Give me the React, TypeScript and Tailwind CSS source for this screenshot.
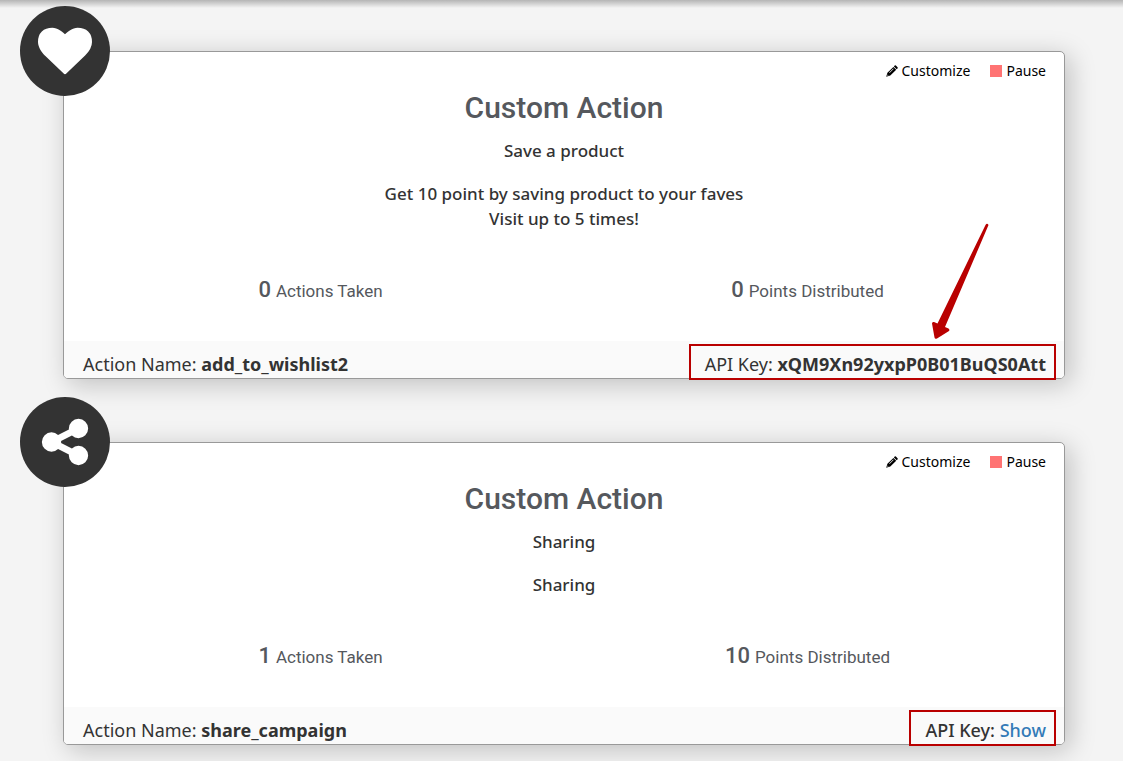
import React from 'react';

interface Campaign {
  id: string;
  icon: React.ReactNode;
  title: string;
  name: string;
  description: string[];
  actions: number;
  points: number;
  actionName: string;
  apiKey?: string;
  arrow?: boolean;
}

const HeartIcon = () => (
  <svg viewBox="0 0 1792 1792" className="w-[54px] h-[54px]" fill="currentColor" aria-hidden="true">
    <path d="M896 1664q-26 0-44-18l-624-602q-10-8-27.5-26T145 952.5 77 855 23.5 734 0 596q0-220 127-344t351-124q62 0 126.500 21.500t120 58T820 276t76 68q36-36 76-68t95.500-68.500 120-58T1314 128q224 0 351 124t127 344q0 221-229 450l-623 600q-18 18-44 18z" />
  </svg>
);

const ShareIcon = () => (
  <svg viewBox="-128 0 1792 1792" className="w-[54px] h-[54px]" fill="currentColor" aria-hidden="true">
    <path d="M1216 1024q133 0 226.500 93.500t93.500 226.500-93.500 226.500-226.500 93.500-226.500-93.500-93.500-226.500q0-12 2-34l-360-180q-92 86-218 86-133 0-226.500-93.500T0 896t93.500-226.500T320 576q126 0 218 86l360-180q-2-22-2-34 0-133 93.500-226.500T1216 128t226.500 93.500T1536 448t-93.500 226.500T1216 768q-126 0-218-86L638 862q2 22 2 34t-2 34l360 180q92-86 218-86z" />
  </svg>
);

const PencilIcon = () => (
  <svg viewBox="0 0 12 12" className="w-3 h-3" fill="currentColor" aria-hidden="true">
    <path d="M8.700.6q.6-.6 1.200 0l1.600 1.600q.6.6 0 1.200l-.8.8-2.800-2.800zM7.400 1.900l2.800 2.800-5.900 5.900L.2 11.800l1.200-4zM7.200 3.600L3.200 7.600l.4.400 4-4zM1.700 9.400l-.4 1.300 1.300-.4z" fillRule="evenodd" />
  </svg>
);

const ArrowMark = () => (
  <svg
    viewBox="0 0 60 118"
    className="absolute right-[56px] bottom-[37px] w-[60px] h-[118px] pointer-events-none"
    fill="#b90000"
    aria-hidden="true"
  >
    <path d="M55.500 3Q57 .5 58.500 3L15 105L18.500 106.500Q20 107.500 19 109L7 116.500Q5 117.500 4.500 115.500L2 101.500Q2 99.500 4 100L7.500 101.500z" />
  </svg>
);

const Stat = ({ value, label }: { value: number; label: string }) => (
  <div className="flex justify-center items-baseline gap-[5px] text-[#55585d]">
    <span className="text-[22px] font-medium">{value}</span>
    <span>{label}</span>
  </div>
);

const CampaignCard = ({ campaign }: { campaign: Campaign }) => (
  <article className="relative rounded-[5px] border border-[#999] bg-white shadow-[5px_5px_26px_rgba(0,0,0,0.22)]">
    <div className="absolute -left-[44px] -top-[46px] w-[90px] h-[90px] rounded-full bg-[#333] text-white flex items-center justify-center">
      {campaign.icon}
    </div>

    <div className="flex justify-end gap-5 px-[18px] pt-[7px] text-sm leading-6 text-black">
      <button type="button" className="flex items-center gap-1">
        <PencilIcon /> Customize
      </button>
      <button type="button" className="flex items-center gap-1">
        <span className="w-3 h-3 bg-[#ff7373]" /> Pause
      </button>
    </div>

    <div className="text-center font-medium">
      <h2 className="pt-[9px] font-[Roboto,sans-serif] text-[30px] leading-8 text-[#55585d]">{campaign.title}</h2>
      <p className="mt-[14px]">{campaign.name}</p>
      <div className="mt-[18px]">
        {campaign.description.map(line => (
          <p key={line}>{line}</p>
        ))}
      </div>
    </div>

    <div className="mt-[43px] pb-[34px] grid grid-cols-2 px-[13px] font-[Roboto,sans-serif] leading-8">
      <Stat value={campaign.actions} label="Actions Taken" />
      <Stat value={campaign.points} label="Points Distributed" />
    </div>

    <footer className="flex justify-between rounded-b-[4px] bg-[#fafafa] pl-[19px] pr-[18px] pt-[11px] pb-px text-lg leading-[25px]">
      <div>
        Action Name: <b>{campaign.actionName}</b>
      </div>
      <div className={campaign.apiKey ? 'relative' : 'relative font-medium'}>
        API Key:{' '}
        {campaign.apiKey ? <b>{campaign.apiKey}</b> : <a href="#show" className="text-[#337ab7]">Show</a>}
        <div className="absolute -left-4 -right-[10px] -top-2 -bottom-[3px] border-2 border-[#b90000] pointer-events-none" />
        {campaign.arrow && <ArrowMark />}
      </div>
    </footer>
  </article>
);

const campaigns: Campaign[] = [
  {
    id: 'wishlist',
    icon: <HeartIcon />,
    title: 'Custom Action',
    name: 'Save a product',
    description: ['Get 10 point by saving product to your faves', 'Visit up to 5 times!'],
    actions: 0,
    points: 0,
    actionName: 'add_to_wishlist2',
    apiKey: 'xQM9Xn92yxpP0B01BuQS0Att',
    arrow: true,
  },
  {
    id: 'share',
    icon: <ShareIcon />,
    title: 'Custom Action',
    name: 'Sharing',
    description: ['Sharing'],
    actions: 1,
    points: 10,
    actionName: 'share_campaign',
  },
];

export default function App() {
  return (
    <div className="min-h-screen bg-[#f4f4f4] font-['Noto_Sans',sans-serif] text-[17px] leading-[25px] text-[#333]">
      <div className="h-2 bg-linear-to-b from-[#b5b5b5] to-[#f4f4f4]" />
      <main className="flex flex-col gap-[63px] pt-[43px] pb-4 pl-[63px] pr-[58px]">
        {campaigns.map(campaign => (
          <CampaignCard key={campaign.id} campaign={campaign} />
        ))}
      </main>
    </div>
  );
}
